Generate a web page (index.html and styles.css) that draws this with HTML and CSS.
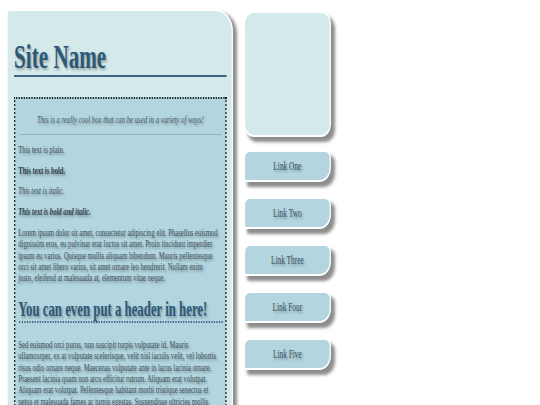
FILE: index.html
```html
<!DOCTYPE html>
<html lang="en">
<head>
<meta charset="utf-8">
<title>Site Name</title>
<link rel="stylesheet" href="styles.css">
</head>
<body>
<div class="page">
  <div class="main">
    <h1 class="site-name">Site Name</h1>
    <div class="cool-box">
      <p class="intro">This is a really cool box that can be used in a variety of ways!</p>
      <hr class="rule">
      <p class="text">This text is plain.</p>
      <p class="text"><b>This text is bold.</b></p>
      <p class="text"><i>This text is italic.</i></p>
      <p class="text"><b><i>This text is bold and italic.</i></b></p>
      <p class="text">Lorem ipsum dolor sit amet, consectetur adipiscing elit. Phasellus euismod dignissim eros, eu pulvinar erat luctus sit amet. Proin tincidunt imperdiet ipsum eu varius. Quisque mollis aliquam bibendum. Mauris pellentesque orci sit amet libero varius, sit amet ornare leo hendrerit. Nullam enim justo,&nbsp;eleifend at malesuada at, elementum vitae neque.</p>
      <h2 class="box-header">You can even put a header in here!</h2>
      <p class="text">Sed euismod orci purus, non suscipit turpis vulputate id. Mauris ullamcorper, ex at vulputate scelerisque, velit nisl iaculis velit, vel lobortis risus odio ornare neque. Maecenas vulputate ante in lacus lacinia ornare. Praesent lacinia quam non arcu efficitur rutrum. Aliquam erat volutpat. Aliquam erat volutpat. Pellentesque habitant morbi tristique senectus et netus et malesuada fames ac turpis egestas. Suspendisse ultricies mollis lorem, sed tincidunt nibh lacinia vel. Donec ut dictum sem.</p>
    </div>
  </div>
  <div class="sidebar">
    <div class="side-box"></div>
    <nav class="links">
      <a class="link" href="#">Link One</a>
      <a class="link" href="#">Link Two</a>
      <a class="link" href="#">Link Three</a>
      <a class="link" href="#">Link Four</a>
      <a class="link" href="#">Link Five</a>
    </nav>
  </div>
</div>
</body>
</html>
```
FILE: styles.css
```css
html, body {
  margin: 0;
  padding: 0;
  overflow: hidden;
  background: #ffffff;
}

.page {
  width: 844px;
  box-sizing: border-box;
  padding: 9px 0 0 10px;
  display: flex;
  align-items: flex-start;
  transform: scaleX(0.64);
  transform-origin: 0 0;
  font-family: "Liberation Serif", "Times New Roman", serif;
}

.main {
  width: 332px;
  min-height: 600px;
  background: #d4eaea;
  border: 2px solid #ffffff;
  border-radius: 5px 28px 0 0 / 4px 22px 0 0;
  box-shadow: 6px 3px 4px rgba(0, 0, 0, 0.45);
  padding: 28px 8px 0 10px;
}

.site-name {
  margin: 0;
  font-size: 33px;
  line-height: 36px;
  font-weight: bold;
  color: #2d5877;
  border-bottom: 2px solid #3a6686;
  text-shadow: 2px 2px 3px rgba(0, 0, 0, 0.3);
}

.cool-box {
  margin-top: 20px;
  background: #b2d5df;
  border: 2px dotted #1e2328;
  padding: 0 4.5px;
}

.intro {
  margin: 15px 0 9px;
  text-align: center;
  font-style: italic;
  font-size: 10.5px;
  line-height: 11px;
  color: #4a5c68;
  text-shadow: 2px 2px 3px rgba(0, 0, 0, 0.3);
}

.rule {
  border: 0;
  border-top: 1px solid #8fb2c1;
  margin: 0 2px 9px;
}

.text {
  margin: 0 0 9.3px;
  font-size: 10.4px;
  line-height: 11.4px;
  color: #44535e;
  text-shadow: 2px 2px 3px rgba(0, 0, 0, 0.35);
}

.text b {
  color: #34434e;
}

.box-header {
  margin: 14px 0 16px;
  font-size: 20px;
  line-height: 23px;
  font-weight: bold;
  color: #2d5877;
  border-bottom: 2px dotted #3a6686;
  text-shadow: 2px 2px 3px rgba(0, 0, 0, 0.3);
}

.sidebar {
  margin-left: 17px;
  width: 136px;
  margin-top: 2px;
}

.side-box {
  height: 122px;
  background: #d4eaea;
  border: 2px solid #ffffff;
  border-radius: 16px / 12px;
  box-shadow: 6px 5px 4px rgba(0, 0, 0, 0.45);
}

.links {
  display: flex;
  flex-direction: column;
  gap: 15px;
  margin-top: 13px;
}

.link {
  display: flex;
  align-items: center;
  justify-content: center;
  height: 28px;
  background: #b2d5df;
  border: 2px solid #ffffff;
  border-radius: 10px 10px 18px 3px / 7px 7px 14px 3px;
  box-shadow: 6px 5px 4px rgba(0, 0, 0, 0.45);
  color: #3b5061;
  font-size: 11.5px;
  text-decoration: none;
  text-shadow: 2px 2px 3px rgba(0, 0, 0, 0.3);
}
```
